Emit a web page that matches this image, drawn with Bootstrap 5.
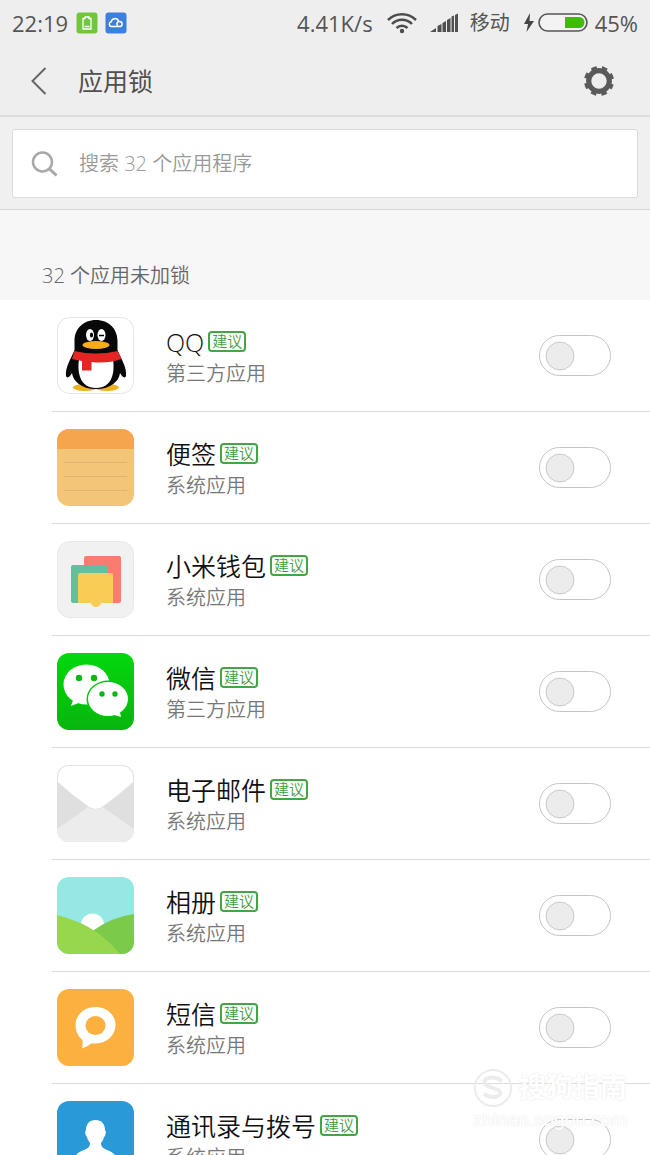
<!DOCTYPE html>
<html lang="zh-CN">
<head>
<meta charset="utf-8">
<meta name="viewport" content="width=device-width, initial-scale=1">
<title>应用锁</title>
<link href="https://cdn.jsdelivr.net/npm/bootstrap@5.3.0/dist/css/bootstrap.min.css" rel="stylesheet">
<style>
  body { font-family: "Open Sans", "Noto Sans CJK SC", sans-serif; font-weight: 350; color: #111; background: #fff; }
  svg { display: block; flex: none; }
  .app-bar { background: #eee; color: #505050; border-bottom: 2px solid #dcdcdc; }
  .status { height: 46px; padding: 0 12px; font-size: 22px; font-weight: 400; line-height: 46px; color: #555; }
  .status .carrier { font-size: 20px; }
  .title-row { height: 69px; padding: 0 34px 0 26px; }
  .title-row h1 { font-size: 25px; font-weight: 400; line-height: 30px; padding-left: 26px; }
  .search-band { background: #f0f0f0; padding: 12px 12px 11px; border-bottom: 1px solid #d8d8d8; }
  .search-box { height: 69px; background: #fff; border: 1px solid #dadada; border-radius: 3px; padding: 0 18px; }
  .search-box .form-control { font-size: 20px; font-weight: 350; line-height: 30px; color: #666; }
  .search-box .form-control::placeholder { color: #999; opacity: 1; }
  .section-title { background: #f7f7f7; height: 90px; padding: 51px 42px 0; font-size: 20px; font-weight: 350; line-height: 30px; color: #666; }
  .app-list { scrollbar-width: none; }
  .app-list::-webkit-scrollbar { display: none; }
  .app-row { height: 112px; margin-left: 52px; padding: 0 39px 0 5px; border-bottom: 1px solid #dcdcdc; }
  .app-row > label { padding-top: 4px; }
  .app-name { font-size: 25px; line-height: 30px; }
  .app-kind { font-size: 20px; line-height: 30px; margin-top: 2px; color: #777; }
  .tip { font-size: 15px; line-height: 17px; color: #3c9f3c; border: 2px solid #43a543; border-radius: 4px; padding: 0 2px; margin-left: 4px; }
  .lock-switch.form-check-input { width: 72px; height: 41px; margin: 0; border: 1px solid #c4c4c4; border-radius: 21px; flex: none;
    background: #fff url("data:image/svg+xml,%3Csvg xmlns='http://www.w3.org/2000/svg' viewBox='0 0 30 30'%3E%3Ccircle cx='15' cy='15' r='14' fill='%23ececec' stroke='%23c8c8c8'/%3E%3C/svg%3E") 5px center / 30px 30px no-repeat; }
  .lock-switch.form-check-input:checked { background-color: #43c01a; background-position: 35px center; }
  .watermark { right: 23px; bottom: 22px; color: #fff; text-shadow: 0 0 2px #dedede; pointer-events: none; font-family: "Liberation Sans", "Noto Sans CJK SC", sans-serif; }
  .watermark .brand { font-size: 27px; line-height: 38px; font-weight: 700; }
  .watermark .site { font-size: 19px; line-height: 26px; font-weight: 400; }
</style>
</head>
<body>
<div class="position-relative vh-100 overflow-hidden d-flex flex-column">
  <header class="app-bar flex-shrink-0">
    <div class="status d-flex align-items-center">
      <span>22:19</span>
      <svg class="ms-2" width="22" height="22" viewBox="0 0 22 22"><rect width="21" height="21" x=".5" y=".5" rx="3" fill="#72c63e"/><path d="M7 6.500h2V5h4v1.500h2V17H7zM8.500 14.500h5" fill="none" stroke="#fff" stroke-width="1.300"/></svg>
      <svg style="margin-left:7px" width="22" height="22" viewBox="0 0 22 22"><rect width="21" height="21" x=".5" y=".5" rx="3" fill="#3b80dc"/><path d="M13 14.500H6.500a2.400 2.400 0 0 1-.4-4.700 3.900 3.900 0 0 1 7.500-.6" fill="none" stroke="#fff" stroke-width="1.500"/><circle cx="14.500" cy="12" r="2.600" fill="none" stroke="#fff" stroke-width="1.500"/></svg>
      <span class="ms-auto">4.41K/s</span>
      <svg style="margin-left:14px" width="30" height="22" viewBox="0 0 30 22"><g fill="none" stroke="#4c4c4c" stroke-width="2.500"><path d="M1 8a20 20 0 0 1 28 0M5 12a14 14 0 0 1 20 0M9.500 16a8 8 0 0 1 11 0"/></g><circle cx="15" cy="19" r="2.200" fill="#4c4c4c"/></svg>
      <svg style="margin-left:12px" width="30" height="20" viewBox="0 0 30 20" fill="#505050"><path d="M1 19l6-4v4zM8.500 13l4-2v8h-4zM13.500 10l3.500-2v11h-3.500zM18 7l3.500-2v14H18zM22.500 3.500L25 2.500V19h-2.500zM26 2l3-1.500V19h-3z"/></svg>
      <span class="carrier" style="margin-left:11px">移动</span>
      <svg style="margin-left:13px" width="12" height="20" viewBox="0 0 12 20"><path d="M7 0L1 11h4L3.500 19 11 8H6.500z" fill="#444"/></svg>
      <svg style="margin-left:3px" width="51" height="20" viewBox="0 0 51 20"><rect x="1" y="1" width="48" height="17" rx="8.500" fill="#f3f3f3" stroke="#555" stroke-width="1.600"/><path d="M27 4h14a5.500 5.500 0 0 1 0 11H27z" fill="#3fbd05"/></svg>
      <span style="margin-left:6px">45%</span>
    </div>
    <div class="title-row d-flex align-items-center">
      <button type="button" class="btn p-0 border-0" aria-label="返回"><svg width="26" height="32" viewBox="0 0 26 32"><path d="M19.500 3L6.500 16l13 13" fill="none" stroke="#666" stroke-width="2"/></svg></button>
      <h1 class="m-0">应用锁</h1>
      <button type="button" class="btn p-0 border-0 ms-auto" aria-label="设置"><svg width="34" height="34" viewBox="-17 -17 34 34"><g fill="none" stroke="#5a5a5a"><circle r="10.300" stroke-width="5.200"/><circle r="13.500" stroke-width="3" stroke-dasharray="5.600 5" stroke-dashoffset="2.800" transform="rotate(22.500)"/></g></svg></button>
    </div>
  </header>

  <div class="search-band flex-shrink-0">
    <div class="search-box d-flex align-items-center">
      <svg width="28" height="28" viewBox="0 0 28 28"><g fill="none" stroke="#a8a8a8" stroke-width="2.500"><circle cx="11.500" cy="12" r="9.500"/><path d="M18 18.500l7.500 7" stroke-width="3"/></g></svg>
      <input type="search" class="form-control border-0 shadow-none bg-transparent py-0 pe-0 ms-1 ps-3" placeholder="搜索 32 个应用程序" aria-label="搜索应用程序">
    </div>
  </div>

  <main class="app-list flex-grow-1 overflow-auto">
    <h2 class="section-title m-0">32 个应用未加锁</h2>

    <div class="app-row d-flex align-items-center">
      <svg width="77" height="77" viewBox="0 0 77 77"><rect x=".5" y=".5" width="76" height="76" rx="12" fill="#fff" stroke="#e4e4e4"/><ellipse cx="28" cy="70.500" rx="12" ry="3.500" fill="#eeb21c"/><ellipse cx="50" cy="70.500" rx="12" ry="3.500" fill="#eeb21c"/><path d="M39 3C26 3 17.500 12 17.500 24v9C14 42 8 50 9 59c1 3 4 1 6-3 1 8 9 16 24 16s23-8 24-16c2 4 5 6 6 3 1-9-5-17-8.500-26v-9C60.500 12 52 3 39 3z" fill="#080808"/><path d="M22 42h34c2 14-1 29-17 29S20 56 22 42z" fill="#fff"/><ellipse cx="33" cy="18" rx="4" ry="6" fill="#fff"/><ellipse cx="44.500" cy="18" rx="4" ry="6" fill="#fff"/><ellipse cx="34.500" cy="18" rx="1.600" ry="2.500" fill="#000"/><path d="M42 18.500h5" fill="none" stroke="#000" stroke-width="1.500"/><ellipse cx="39" cy="28" rx="13.500" ry="4" fill="#f4ae16"/><path d="M17.500 34q21 5 43 0l4 8q-14 5-30 3v8.500H25V44q-6-1-10-2z" fill="#e52424"/></svg>
      <label for="lock-qq" class="ms-4 ps-2 flex-grow-1"><span class="d-flex align-items-center app-name">QQ<span class="tip">建议</span></span><span class="d-block app-kind">第三方应用</span></label>
      <input id="lock-qq" type="checkbox" role="switch" class="form-check-input lock-switch">
    </div>

    <div class="app-row d-flex align-items-center">
      <svg width="77" height="77" viewBox="0 0 77 77"><rect width="77" height="77" rx="12" fill="#f3c579"/><path d="M0 20v-8A12 12 0 0 1 12 0h53a12 12 0 0 1 12 12v8z" fill="#f5a64d"/><path d="M7 33.500h63M7 47.500h63M7 61.500h63" stroke="#dfb46e"/></svg>
      <label for="lock-notes" class="ms-4 ps-2 flex-grow-1"><span class="d-flex align-items-center app-name">便签<span class="tip">建议</span></span><span class="d-block app-kind">系统应用</span></label>
      <input id="lock-notes" type="checkbox" role="switch" class="form-check-input lock-switch">
    </div>

    <div class="app-row d-flex align-items-center">
      <svg width="77" height="77" viewBox="0 0 77 77"><rect x=".5" y=".5" width="76" height="76" rx="12" fill="#f1f1f1" stroke="#e9e9e9"/><rect x="27" y="15" width="37" height="47" rx="2" fill="#fa7c71"/><rect x="14" y="24" width="36" height="38" rx="2" fill="#63bf9e"/><path d="M23 32h31a2 2 0 0 1 2 2v28H44q-1 4-5 4t-5-4H21V34a2 2 0 0 1 2-2z" fill="#f7cd54"/></svg>
      <label for="lock-wallet" class="ms-4 ps-2 flex-grow-1"><span class="d-flex align-items-center app-name">小米钱包<span class="tip">建议</span></span><span class="d-block app-kind">系统应用</span></label>
      <input id="lock-wallet" type="checkbox" role="switch" class="form-check-input lock-switch">
    </div>

    <div class="app-row d-flex align-items-center">
      <svg width="77" height="77" viewBox="0 0 77 77"><defs><linearGradient id="wx" x2="0" y2="1"><stop stop-color="#04d70e"/><stop offset="1" stop-color="#06b60d"/></linearGradient></defs><rect width="77" height="77" rx="12" fill="url(#wx)"/><ellipse cx="29.500" cy="31.500" rx="23" ry="20" fill="#fff"/><path d="M17 44l-3 9 10-4z" fill="#fff"/><ellipse cx="51" cy="46" rx="21.500" ry="18.500" fill="#05c60e"/><ellipse cx="51" cy="46" rx="20" ry="17" fill="#fff"/><path d="M54 61l10 3-2-9z" fill="#fff"/><g fill="#08b910"><circle cx="22" cy="25" r="3.200"/><circle cx="37" cy="25" r="3.200"/><circle cx="45" cy="41" r="2.700"/><circle cx="58" cy="41" r="2.700"/></g></svg>
      <label for="lock-wechat" class="ms-4 ps-2 flex-grow-1"><span class="d-flex align-items-center app-name">微信<span class="tip">建议</span></span><span class="d-block app-kind">第三方应用</span></label>
      <input id="lock-wechat" type="checkbox" role="switch" class="form-check-input lock-switch">
    </div>

    <div class="app-row d-flex align-items-center">
      <svg width="77" height="77" viewBox="0 0 77 77"><rect width="77" height="77" rx="12" fill="#dfdfdf"/><path d="M0 64l38.500-27L77 64v1a12 12 0 0 1-12 12H12A12 12 0 0 1 0 65z" fill="#ececec"/><path d="M.5 17v-5A11.500 11.500 0 0 1 12 .5h53A11.500 11.500 0 0 1 76.500 12v5Q60 32 44 43q-5.500 3-11 0Q17 32 .5 17z" fill="#fff" stroke="#e4e4e4"/></svg>
      <label for="lock-mail" class="ms-4 ps-2 flex-grow-1"><span class="d-flex align-items-center app-name">电子邮件<span class="tip">建议</span></span><span class="d-block app-kind">系统应用</span></label>
      <input id="lock-mail" type="checkbox" role="switch" class="form-check-input lock-switch">
    </div>

    <div class="app-row d-flex align-items-center">
      <svg width="77" height="77" viewBox="0 0 77 77"><defs><clipPath id="pic"><rect width="77" height="77" rx="12"/></clipPath></defs><g clip-path="url(#pic)"><path fill="#95e8e3" d="M0 0h77v77H0z"/><circle cx="35.500" cy="48" r="11.500" fill="#fff"/><path d="M34 55Q54 40 77 37v40H34z" fill="#7bca49"/><path d="M0 38q24 6 41 18 13 10 22 21H0z" fill="#97d74d"/></g></svg>
      <label for="lock-gallery" class="ms-4 ps-2 flex-grow-1"><span class="d-flex align-items-center app-name">相册<span class="tip">建议</span></span><span class="d-block app-kind">系统应用</span></label>
      <input id="lock-gallery" type="checkbox" role="switch" class="form-check-input lock-switch">
    </div>

    <div class="app-row d-flex align-items-center">
      <svg width="77" height="77" viewBox="0 0 77 77"><rect width="77" height="77" rx="12" fill="#fcb040"/><path d="M38.500 18C50 18 58.500 26 58.500 36S50 54.500 38.500 54.500c-2 0-3 0-4-.3Q31 57.500 25 59.500q1-4 .5-8.500C21 47.500 18.500 42 18.500 36c0-10 8.500-18 20-18z" fill="#fff"/><ellipse cx="38.500" cy="36.500" rx="10" ry="9.500" fill="#fcb040"/></svg>
      <label for="lock-sms" class="ms-4 ps-2 flex-grow-1"><span class="d-flex align-items-center app-name">短信<span class="tip">建议</span></span><span class="d-block app-kind">系统应用</span></label>
      <input id="lock-sms" type="checkbox" role="switch" class="form-check-input lock-switch">
    </div>

    <div class="app-row d-flex align-items-center">
      <svg width="77" height="77" viewBox="0 0 77 77"><rect width="77" height="77" rx="12" fill="#2a9ad7"/><path d="M38.500 19c6 0 9.500 4 9.500 10l1 2-1 4-1 1c-.5 3-2 4-3 6 0 4 2 5 6 7 6 2 9 5 10 10v3H17v-3c1-5 4-8 10-10 4-2 6-3 6-7-1-2-2.500-3-3-6l-1-1-1-4 1-2c0-6 3.500-10 9.500-10z" fill="#fff"/></svg>
      <label for="lock-contacts" class="ms-4 ps-2 flex-grow-1"><span class="d-flex align-items-center app-name">通讯录与拨号<span class="tip">建议</span></span><span class="d-block app-kind">系统应用</span></label>
      <input id="lock-contacts" type="checkbox" role="switch" class="form-check-input lock-switch">
    </div>
  </main>

  <div class="watermark position-absolute">
    <div class="brand d-flex align-items-center justify-content-between"><svg width="40" height="38" viewBox="0 0 40 38"><g fill="none" stroke="#ececec"><circle cx="20" cy="19" r="18" stroke-width="2"/><path d="M29 12q-9-6-16-2-4 4 2 7l10 4q5 3 0 6-7 3-14-2" stroke-width="4"/></g></svg><span>搜狗指南</span></div>
    <div class="site">zhinan.sogou.com</div>
  </div>
</div>
<script src="https://cdn.jsdelivr.net/npm/bootstrap@5.3.0/dist/js/bootstrap.bundle.min.js"></script>
</body>
</html>
